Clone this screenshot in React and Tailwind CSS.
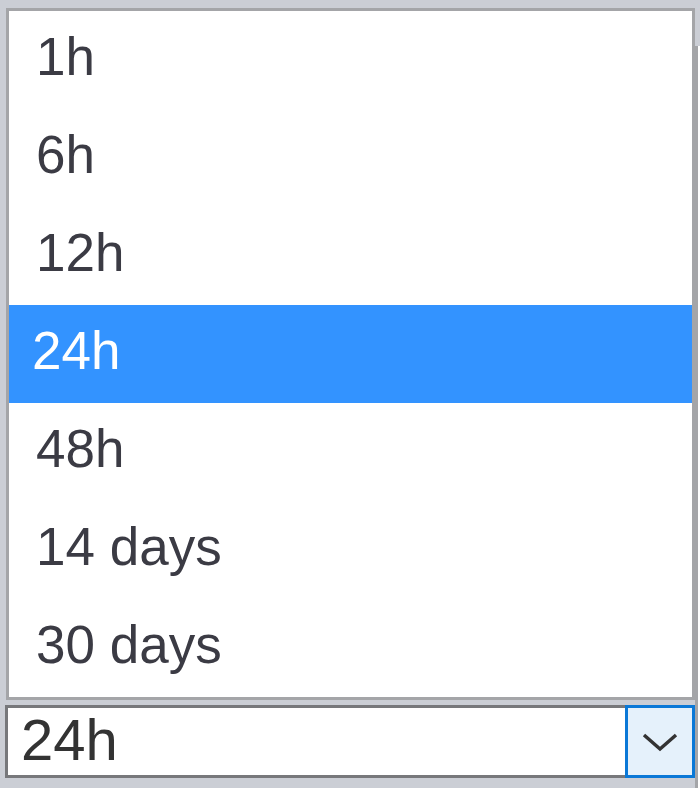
import React from "react";

const options = ["1h", "6h", "12h", "24h", "48h", "14 days", "30 days"];

export default function App() {
  const selected = "24h";

  return (
    <div className="w-[700px] h-[788px] overflow-hidden bg-[#cbced5] flex font-[family-name:Liberation_Sans,Arial,sans-serif]">
      <div className="w-[695px] pl-[6px] pt-[8px] flex flex-col">
        {/* open list */}
        <div className="bg-white border-[3px] border-[#a4a5a8] flex flex-col">
          {options.map((opt) => (
            <div
              key={opt}
              className={
                opt === selected
                  ? "h-[98px] flex items-center pl-[23px] pb-[6px] text-[53px] text-white bg-[#3393ff]"
                  : "h-[98px] flex items-center pl-[27px] pb-[6px] text-[53px] text-[#3b3b44]"
              }
            >
              {opt}
            </div>
          ))}
        </div>

        {/* closed select */}
        <div className="mt-[5px] -ml-[1px] h-[73px] flex">
          <div className="flex-1 bg-white border-y-[3px] border-l-[3px] border-[#77787b] flex items-center pl-[13px] pb-[4px] text-[58px] text-[#333]">
            {selected}
          </div>
          <div className="w-[70px] bg-[#e5f1fb] border-[3px] border-[#0a78d7] flex items-center justify-center">
            <svg width="36" height="20" viewBox="0 0 36 20" fill="none">
              <path d="M2 3 L18 17 L34 3" stroke="#333" strokeWidth="3.5" />
            </svg>
          </div>
        </div>
      </div>
      <div className="flex-1 pt-[46px]">
        <div className="h-full bg-white border-l-[3px] border-[#a4a5a8]" />
      </div>
    </div>
  );
}
